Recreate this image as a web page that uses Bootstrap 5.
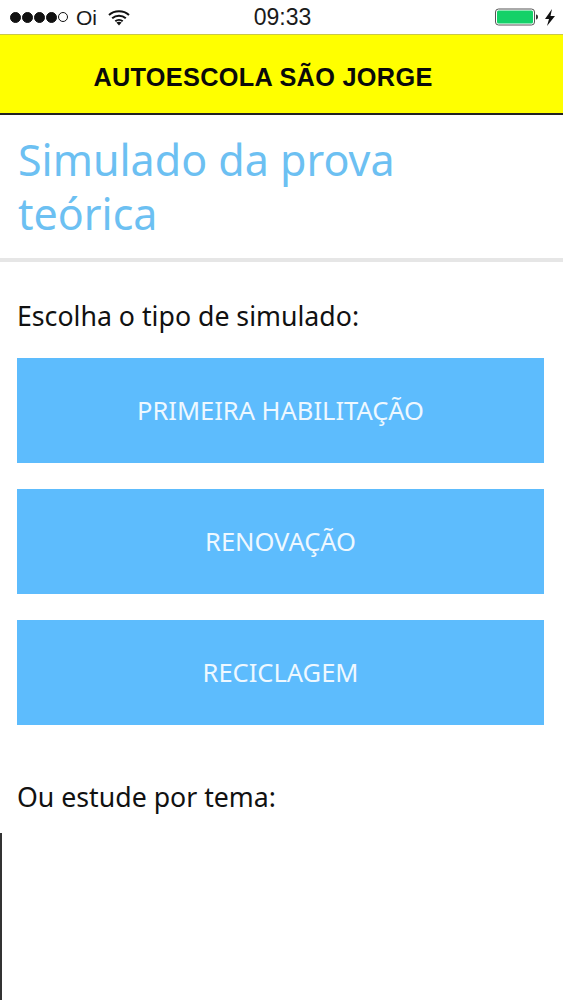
<!DOCTYPE html>
<html lang="pt">
<head>
<meta charset="utf-8">
<title>Autoescola São Jorge</title>
<link rel="stylesheet" href="https://cdn.jsdelivr.net/npm/bootstrap@5.3.0/dist/css/bootstrap.min.css">
<style>
html,body{height:1000px;overflow:hidden;background:#fff;}
body{font-family:"Noto Sans","Open Sans",sans-serif;color:#111;}
.status-row{height:34px;font-family:"Liberation Sans",sans-serif;color:#1a1a1a;padding:0 8px 0 10px;}
.status-side{flex:1 1 0;}
.status-left{font-size:21px;line-height:1;gap:7px;}
.sig-dots{gap:1px;}
.sig-dot{width:11px;height:11px;border-radius:50%;background:#111;border:1px solid #111;}
.sig-dot.off{background:#fff;width:10px;height:10px;margin-top:.5px;}
.oi-label{margin-left:1px;}
.status-time{font-size:23px;line-height:1;padding:0;width:70px;text-align:center;}
.status-right{gap:6px;}
.brand-bar{height:81px;background:#ff0;border-top:1px solid #c9c74a;border-bottom:2px solid #222;font-family:"Liberation Sans",sans-serif;font-weight:700;color:#0a0a0a;font-size:25.300px;letter-spacing:.3px;padding-top:7px;}
.brand-text{margin-left:-37px;}
.page-head{height:147px;padding:18px 18px 0;border-bottom:4px solid #e6e6e6;}
.page-head h1{font-size:43px;line-height:54px;color:#6cc0f2;font-weight:400;margin:0;font-family:"Noto Sans",sans-serif;max-width:420px;}
.body-wrap{padding:0 19px 0 17px;}
.lead-line{font-size:26.700px;line-height:32px;margin:0;}
.lead-first{margin-top:38px;}
.lead-second{margin-top:56px;}
.btn-stack{margin-top:26px;gap:26px;}
.choice-btn{height:105px;background:#5dbcfd;color:#eef8ff;font-size:25.500px;border:0;border-radius:0;width:100%;display:flex;align-items:center;justify-content:center;}
.choice-btn:hover{background:#5dbcfd;color:#eef8ff;}
.edge-line{height:167px;margin-top:20px;border-left:2px solid #333;}
</style>
</head>
<body>
<div class="status-row d-flex align-items-center">
  <div class="status-side status-left d-flex align-items-center">
    <div class="sig-dots d-flex align-items-center">
      <span class="sig-dot"></span><span class="sig-dot"></span><span class="sig-dot"></span><span class="sig-dot"></span><span class="sig-dot off"></span>
    </div>
    <span class="oi-label">Oi</span>
    <svg class="ms-1" width="22" height="17" viewBox="0 0 22 16" aria-hidden="true"><path d="M1 5.500C6.500.5 15.500.5 21 5.500M4.200 8.800C8 5.300 14 5.300 17.800 8.800M7.300 11.800C9.400 10 12.600 10 14.700 11.800" fill="none" stroke="#111" stroke-width="2"/><path d="M11 16l-2.600-3c1.500-1 3.700-1 5.200 0z" fill="#111"/></svg>
  </div>
  <div class="status-time">09:33</div>
  <div class="status-side status-right d-flex align-items-center justify-content-end">
    <svg width="44" height="18" viewBox="0 0 44 18" aria-hidden="true"><rect x=".5" y="1" width="39" height="16" rx="3" fill="#fff" stroke="#555"/><rect x="2" y="2.500" width="36" height="13" rx="1.500" fill="#14d168"/><path d="M41 6.500c1.500.3 2 1.200 2 2.500s-.5 2.200-2 2.500z" fill="#333"/></svg>
    <svg width="10" height="17" viewBox="0 0 10 17" aria-hidden="true"><path d="M7 0L0 10h4l-2 7 8-10H5.500z" fill="#111"/></svg>
  </div>
</div>
<div class="brand-bar d-flex align-items-center justify-content-center"><span class="brand-text">AUTOESCOLA SÃO JORGE</span></div>
<div class="page-head"><h1>Simulado da prova teórica</h1></div>
<div class="body-wrap">
  <p class="lead-line lead-first">Escolha o tipo de simulado:</p>
  <div class="btn-stack d-flex flex-column">
    <button class="btn choice-btn" type="button">PRIMEIRA HABILITAÇÃO</button>
    <button class="btn choice-btn" type="button">RENOVAÇÃO</button>
    <button class="btn choice-btn" type="button">RECICLAGEM</button>
  </div>
  <p class="lead-line lead-second">Ou estude por tema:</p>
</div>
<div class="edge-line"></div>
<script src="https://cdn.jsdelivr.net/npm/bootstrap@5.3.0/dist/js/bootstrap.bundle.min.js"></script>
</body>
</html>
